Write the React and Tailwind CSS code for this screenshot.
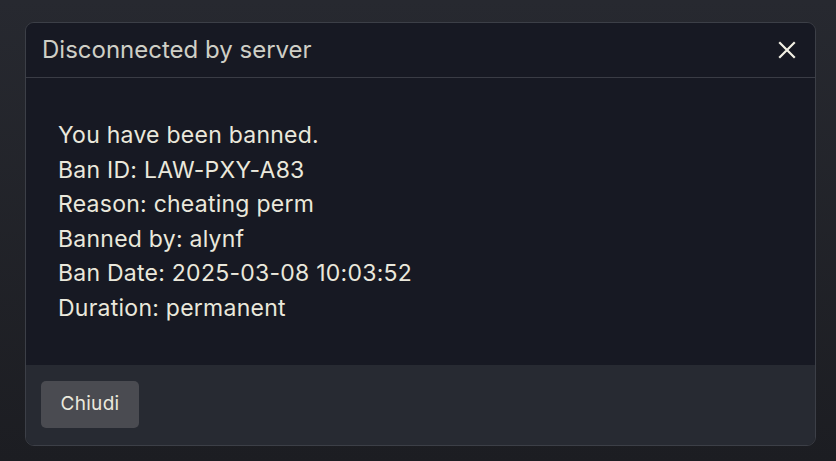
export default function App() {
  return (
    <div
      className="w-[836px] h-[461px] bg-gradient-to-b from-[#272930] to-[#1c1d22] pt-[22px] px-[25px]"
      style={{ fontFamily: "Inter, 'Noto Sans', sans-serif" }}
    >
      <div className="w-[791px] h-[424px] rounded-[9px] border border-[#3c3f47] overflow-hidden flex flex-col">
        <div className="h-[55px] bg-[#171923] border-b border-[#3a3c45] flex items-center justify-between pl-[16px] pr-[18px]">
          <div className="text-[24px] text-[#cfcfc6]">Disconnected by server</div>
          <svg width="18" height="18" viewBox="0 0 18 18" className="mr-[1px]">
            <path d="M2 2 L16 16 M16 2 L2 16" stroke="#f2f0e4" strokeWidth="2.2" strokeLinecap="square" />
          </svg>
        </div>
        <div className="h-[287px] bg-[#171923] pt-[40px] pl-[32px] text-[23px] leading-[34.5px] text-[#eae8dc] tracking-[0.25px]">
          <div>You have been banned.</div>
          <div>Ban ID: LAW-PXY-A83</div>
          <div>Reason: cheating perm</div>
          <div>Banned by: alynf</div>
          <div>Ban Date: 2025-03-08 10:03:52</div>
          <div>Duration: permanent</div>
        </div>
        <div className="flex-1 bg-[#272a32] pt-[16px] pl-[15px]">
          <button className="w-[98px] h-[47px] rounded-[5px] bg-[#4a4b51] text-[19px] tracking-[0.3px] text-[#ebe9dd]">Chiudi</button>
        </div>
      </div>
    </div>
  );
}
